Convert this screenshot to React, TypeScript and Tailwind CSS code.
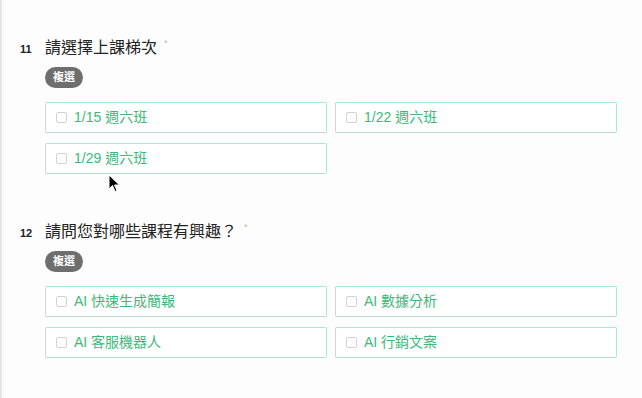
const font = { fontFamily: '"Liberation Sans", "Noto Sans CJK TC", sans-serif' };

type Question = {
  no: string;
  title: string;
  options: string[];
};

const questions: Question[] = [
  { no: "11", title: "請選擇上課梯次", options: ["1/15 週六班", "1/22 週六班", "1/29 週六班"] },
  {
    no: "12",
    title: "請問您對哪些課程有興趣？",
    options: ["AI 快速生成簡報", "AI 數據分析", "AI 客服機器人", "AI 行銷文案"],
  },
];

function Option({ label }: { label: string }) {
  return (
    <label className="flex h-[31px] items-center gap-[7px] rounded-[2px] border border-t-[#a6ecd2] border-r-[#a6ecd2] border-b-[#b5dccb] border-l-[#d4d4d4] bg-white pl-[10px]">
      <span className="h-[11px] w-[11px] rounded-[2px] border border-[#d2d2d2] bg-white" />
      <span className="text-[14px] text-[#3cb97a]">{label}</span>
    </label>
  );
}

function QuestionBlock({ q }: { q: Question }) {
  return (
    <div className="flex">
      <div className="w-[25px] pt-[5px] text-[11px] font-bold text-[#222]">{q.no}</div>
      <div className="w-[572px]">
        <div className="flex h-[24px] items-center text-[16px] text-[#222]">
          {q.title}
          <span className="ml-[7px] -mt-[8px] text-[9px] text-[#a9c99a]">*</span>
        </div>
        <div className="mt-[7px] flex h-[21px] w-fit items-center rounded-full bg-[#6e6e6e] px-[8px] text-[11px] font-bold text-white">
          複選
        </div>
        <div className="mt-[14px] grid grid-cols-2 gap-x-[8px] gap-y-[10px]">
          {q.options.map((o) => (
            <Option key={o} label={o} />
          ))}
        </div>
      </div>
    </div>
  );
}

export default function App() {
  return (
    <div className="relative h-[398px] w-[642px] overflow-hidden bg-[#fdfdfd]" style={font}>
      <div className="absolute left-0 top-0 h-full w-[2px] bg-[#e3e5e4]" />
      <div className="flex flex-col gap-[46px] pl-[20px] pt-[36px]">
        {questions.map((q) => (
          <QuestionBlock key={q.no} q={q} />
        ))}
      </div>
      {/* mouse cursor */}
      <svg className="absolute left-[108px] top-[174px]" width="13" height="19" viewBox="0 0 13 19">
        <path d="M1 1 L1 15 L4.5 11.5 L7 17.5 L9 16.7 L6.6 11 L11.5 11 Z" fill="#000" stroke="#fff" strokeWidth="1" />
      </svg>
    </div>
  );
}
